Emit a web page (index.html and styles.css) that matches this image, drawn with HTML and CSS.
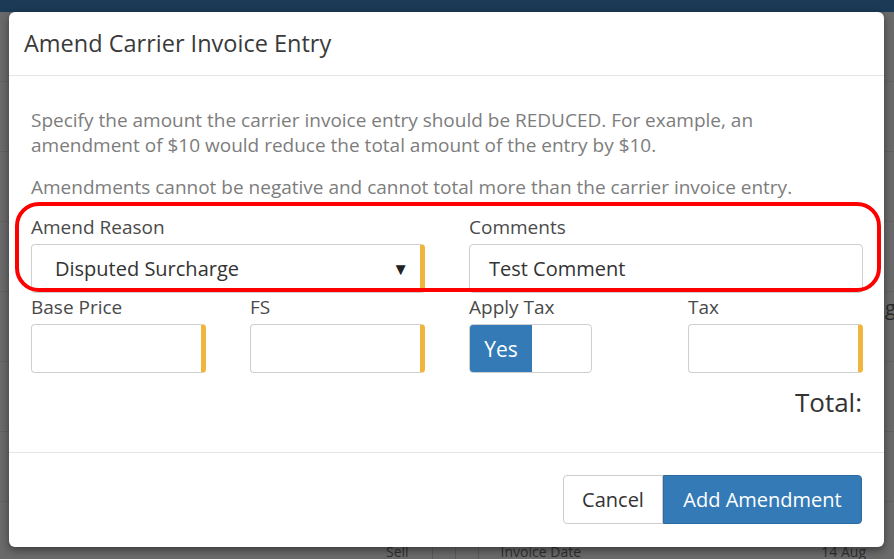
FILE: index.html
```html
<!DOCTYPE html>
<html>
<head>
<meta charset="utf-8">
<link rel="stylesheet" href="styles.css">
</head>
<body>
<div class="page">
  <div class="topbar"></div>
  <div class="bg-rows">
    <div class="bg-row"></div>
    <div class="bg-row"></div>
    <div class="bg-row"></div>
    <div class="bg-row"></div>
    <div class="bg-row"></div>
    <div class="bg-row"></div>
    <div class="bg-row"></div>
  </div>
  <div class="bg-bottom">
    <span class="bg-sell">Sell</span>
    <span class="bg-sep"></span>
    <span class="bg-sep"></span>
    <span class="bg-sep"></span>
    <span class="bg-date">Invoice Date</span>
    <span class="bg-val">14 Aug</span>
  </div>
  <span class="bg-g">g</span>
</div>

<div class="modal">
  <div class="modal-header">
    <h4 class="modal-title">Amend Carrier Invoice Entry</h4>
  </div>
  <div class="modal-body">
    <p class="help">Specify the amount the carrier invoice entry should be REDUCED. For example, an amendment of $10 would reduce the total amount of the entry by $10.</p>
    <p class="help help2">Amendments cannot be negative and cannot total more than the carrier invoice entry.</p>
    <div class="form-grid">
      <div class="field span2">
        <label class="lbl">Amend Reason</label>
        <div class="control req select">
          <span class="val">Disputed Surcharge</span>
          <span class="caret">&#9660;</span>
        </div>
      </div>
      <div class="field span2">
        <label class="lbl">Comments</label>
        <div class="control">
          <span class="val val-c">Test Comment</span>
        </div>
      </div>
      <div class="field">
        <label class="lbl">Base Price</label>
        <div class="control req"></div>
      </div>
      <div class="field">
        <label class="lbl">FS</label>
        <div class="control req"></div>
      </div>
      <div class="field">
        <label class="lbl">Apply Tax</label>
        <div class="toggle"><span class="yes">Yes</span><span class="no"></span></div>
      </div>
      <div class="field">
        <label class="lbl">Tax</label>
        <div class="control req"></div>
      </div>
    </div>
    <div class="total">Total:</div>
    <div class="highlight"></div>
  </div>
  <div class="modal-footer">
    <div class="btn-group">
      <button class="btn btn-default">Cancel</button>
      <button class="btn btn-primary">Add Amendment</button>
    </div>
  </div>
</div>
</body>
</html>
```

FILE: styles.css
```css
* { box-sizing: border-box; }
html, body {
  margin: 0;
  padding: 0;
  width: 894px;
  height: 559px;
  overflow: hidden;
}
body {
  background: #6a6a6a;
  font-family: "Open Sans", "Liberation Sans", sans-serif;
  position: relative;
}
.page {
  width: 894px;
  height: 559px;
}
.topbar {
  height: 12px;
  background: #1c3a55;
}
.bg-rows {
  display: flex;
  flex-direction: column;
}
.bg-row {
  height: 70px;
  border-bottom: 1px solid #626262;
}
.bg-g {
  position: absolute;
  left: 885px;
  top: 294px;
  font-size: 20px;
  line-height: 28px;
  color: #2a2a2a;
}
.bg-bottom {
  position: absolute;
  left: 0;
  top: 543px;
  width: 894px;
  height: 16px;
  display: flex;
  align-items: flex-end;
  color: #2e2e2e;
  font-size: 14px;
  line-height: 15px;
}
.bg-sell { margin-left: 386px; }
.bg-sep { width: 1px; height: 16px; background: #5a5a5a; margin-left: 23px; }
.bg-sep + .bg-sep { margin-left: 22px; }
.bg-date { margin-left: 22px; }
.bg-val { margin-left: auto; margin-right: 28px; }

.modal {
  position: absolute;
  left: 9px;
  top: 12px;
  width: 875px;
  height: 535px;
  background: #fff;
  border-radius: 6px;
  box-shadow: 0 3px 8px rgba(0,0,0,0.45);
  display: flex;
  flex-direction: column;
}
.modal-header {
  height: 64px;
  padding: 15px 15px 0;
  border-bottom: 1px solid #e5e5e5;
}
.modal-title {
  margin: 0;
  font-size: 23.5px;
  font-weight: normal;
  color: #3a3a3a;
  line-height: 32px;
}
.modal-body {
  position: relative;
  padding: 32px 22px 0;
  height: 377px;
  border-bottom: 1px solid #e5e5e5;
}
.help {
  margin: 0;
  font-size: 19px;
  line-height: 25px;
  color: #7d7d7d;
}
.help2 { margin-top: 17px; }
.form-grid {
  margin-top: 16px;
  display: grid;
  grid-template-columns: repeat(4, 175px);
  column-gap: 44px;
  row-gap: 3px;
}
.span2 { grid-column: span 2; }
.lbl {
  display: block;
  font-size: 19px;
  line-height: 22px;
  color: #4a4a4a;
  margin-bottom: 6px;
}
.control {
  height: 49px;
  border: 1px solid #cfcfcf;
  border-radius: 4px;
  display: flex;
  align-items: center;
  padding-left: 23px;
  font-size: 20px;
  color: #333;
}
.control.req { border-right: 5px solid #f2b53c; }
.val-c { margin-left: -4px; }
.select { justify-content: space-between; padding-right: 11px; }
.caret { font-size: 17px; color: #222; }
.toggle {
  width: 123px;
  height: 49px;
  border: 1px solid #cfcfcf;
  border-radius: 4px;
  display: flex;
  overflow: hidden;
}
.yes {
  width: 62px;
  background: #337ab7;
  color: #fff;
  font-size: 21px;
  display: flex;
  align-items: center;
  justify-content: center;
}
.total {
  text-align: right;
  font-size: 26px;
  line-height: 32px;
  color: #333;
  margin-top: 13px;
}
.highlight {
  position: absolute;
  left: 6px;
  top: 126px;
  width: 866px;
  height: 90px;
  border: 4px solid #ff0000;
  border-radius: 24px;
  pointer-events: none;
}
.modal-footer {
  flex: 1;
  display: flex;
  justify-content: flex-end;
  align-items: flex-start;
  padding: 22px 22px 0;
}
.btn-group { display: flex; }
.btn {
  font-family: "Open Sans", "Liberation Sans", sans-serif;
  height: 49px;
  font-size: 20px;
  border: 1px solid #ccc;
  margin: 0;
}
.btn-default {
  width: 100px;
  background: #fff;
  color: #333;
  border-radius: 4px 0 0 4px;
}
.btn-primary {
  width: 199px;
  background: #337ab7;
  border-color: #2e6da4;
  color: #fff;
  border-radius: 0 4px 4px 0;
}
```
